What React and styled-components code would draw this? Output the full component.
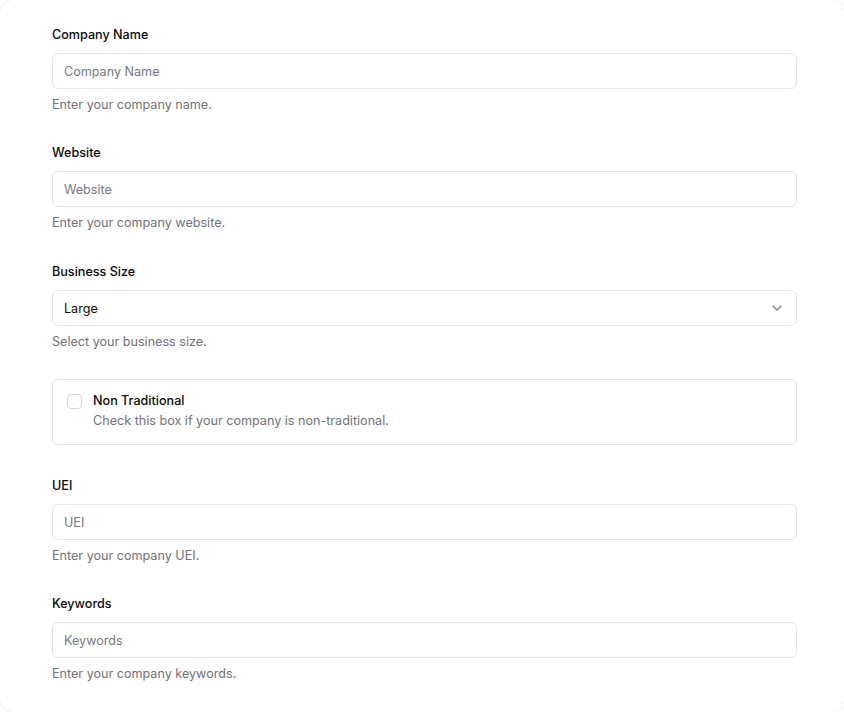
import styled, { createGlobalStyle } from 'styled-components'
import { ChevronDown } from 'lucide-react'

const fields = [
  { label: 'Company Name', placeholder: 'Company Name', hint: 'Enter your company name.' },
  { label: 'Website', placeholder: 'Website', hint: 'Enter your company website.' },
]

const lowerFields = [
  { label: 'UEI', placeholder: 'UEI', hint: 'Enter your company UEI.' },
  { label: 'Keywords', placeholder: 'Keywords', hint: 'Enter your company keywords.' },
]

const TextField = ({ label, placeholder, hint }) => (
  <Item>
    <Label>{label}</Label>
    <Input placeholder={placeholder} />
    <Hint>{hint}</Hint>
  </Item>
)

const App = () => {
  return (
    <>
      <GlobalStyle />
      <Card>
        <Form onSubmit={e => e.preventDefault()}>
          {fields.map(f => (
            <TextField key={f.label} {...f} />
          ))}
          <Item $offset={1}>
            <Label>Business Size</Label>
            <Select type="button">
              <span>Large</span>
              <ChevronDown size={16} strokeWidth={2} />
            </Select>
            <Hint>Select your business size.</Hint>
          </Item>
          <CheckCard>
            <Box type="button" aria-label="Non Traditional" />
            <CheckText>
              <CheckTitle>Non Traditional</CheckTitle>
              <Hint>Check this box if your company is non-traditional.</Hint>
            </CheckText>
          </CheckCard>
          {lowerFields.map(f => (
            <TextField key={f.label} {...f} />
          ))}
        </Form>
      </Card>
    </>
  )
}

const GlobalStyle = createGlobalStyle`
  * {
    box-sizing: border-box;
  }
  body {
    margin: 0;
    overflow: hidden;
    background: #ffffff;
    font-family: Inter, "Liberation Sans", sans-serif;
    color: #09090b;
  }
`

const Card = styled.div`
  width: 846px;
  height: 714px;
  margin: -1px;
  border: 1px solid #f1f1f3;
  border-radius: 14px;
  padding: 25px 47px 0 52px;
  overflow: hidden;
`

const Form = styled.form`
  display: flex;
  flex-direction: column;
  gap: 28px;
`

const Item = styled.div`
  display: flex;
  flex-direction: column;
  margin-top: ${p => p.$offset || 0}px;
`

const Label = styled.label`
  font-size: 12.6px;
  line-height: 20px;
  font-weight: 500;
  color: #09090b;
  margin-bottom: 8px;
`

const Input = styled.input`
  height: 36px;
  width: 100%;
  border: 1px solid #e4e4e7;
  border-radius: 6px;
  padding: 0 11px;
  font-family: inherit;
  font-size: 12.6px;
  color: #09090b;
  background: transparent;
  outline: none;

  &::placeholder {
    color: #78787f;
  }
`

const Select = styled.button`
  height: 36px;
  width: 100%;
  display: flex;
  align-items: center;
  justify-content: space-between;
  border: 1px solid #e4e4e7;
  border-radius: 6px;
  padding: 0 11px;
  background: transparent;
  font-family: inherit;
  font-size: 12.6px;
  color: #09090b;
  cursor: pointer;

  svg {
    color: #09090b;
    opacity: 0.5;
  }
`

const Hint = styled.p`
  margin: 6px 0 0;
  font-size: 12.6px;
  line-height: 20px;
  color: #71717a;
`

const CheckCard = styled.div`
  display: flex;
  align-items: flex-start;
  gap: 11px;
  margin: -1px 0 3px;
  border: 1px solid #e4e4e7;
  border-radius: 6px;
  padding: 13px 14px;
`

const Box = styled.button`
  width: 15px;
  height: 15px;
  flex-shrink: 0;
  margin-top: 1px;
  padding: 0;
  border: 1px solid #d4d4d8;
  border-radius: 4px;
  background: #fff;
`

const CheckText = styled.div`
  display: flex;
  flex-direction: column;
  padding-top: 1px;

  p {
    margin-top: 3px;
  }
`

const CheckTitle = styled.label`
  font-size: 12.6px;
  line-height: 14px;
  font-weight: 500;
  color: #09090b;
`

export default App
